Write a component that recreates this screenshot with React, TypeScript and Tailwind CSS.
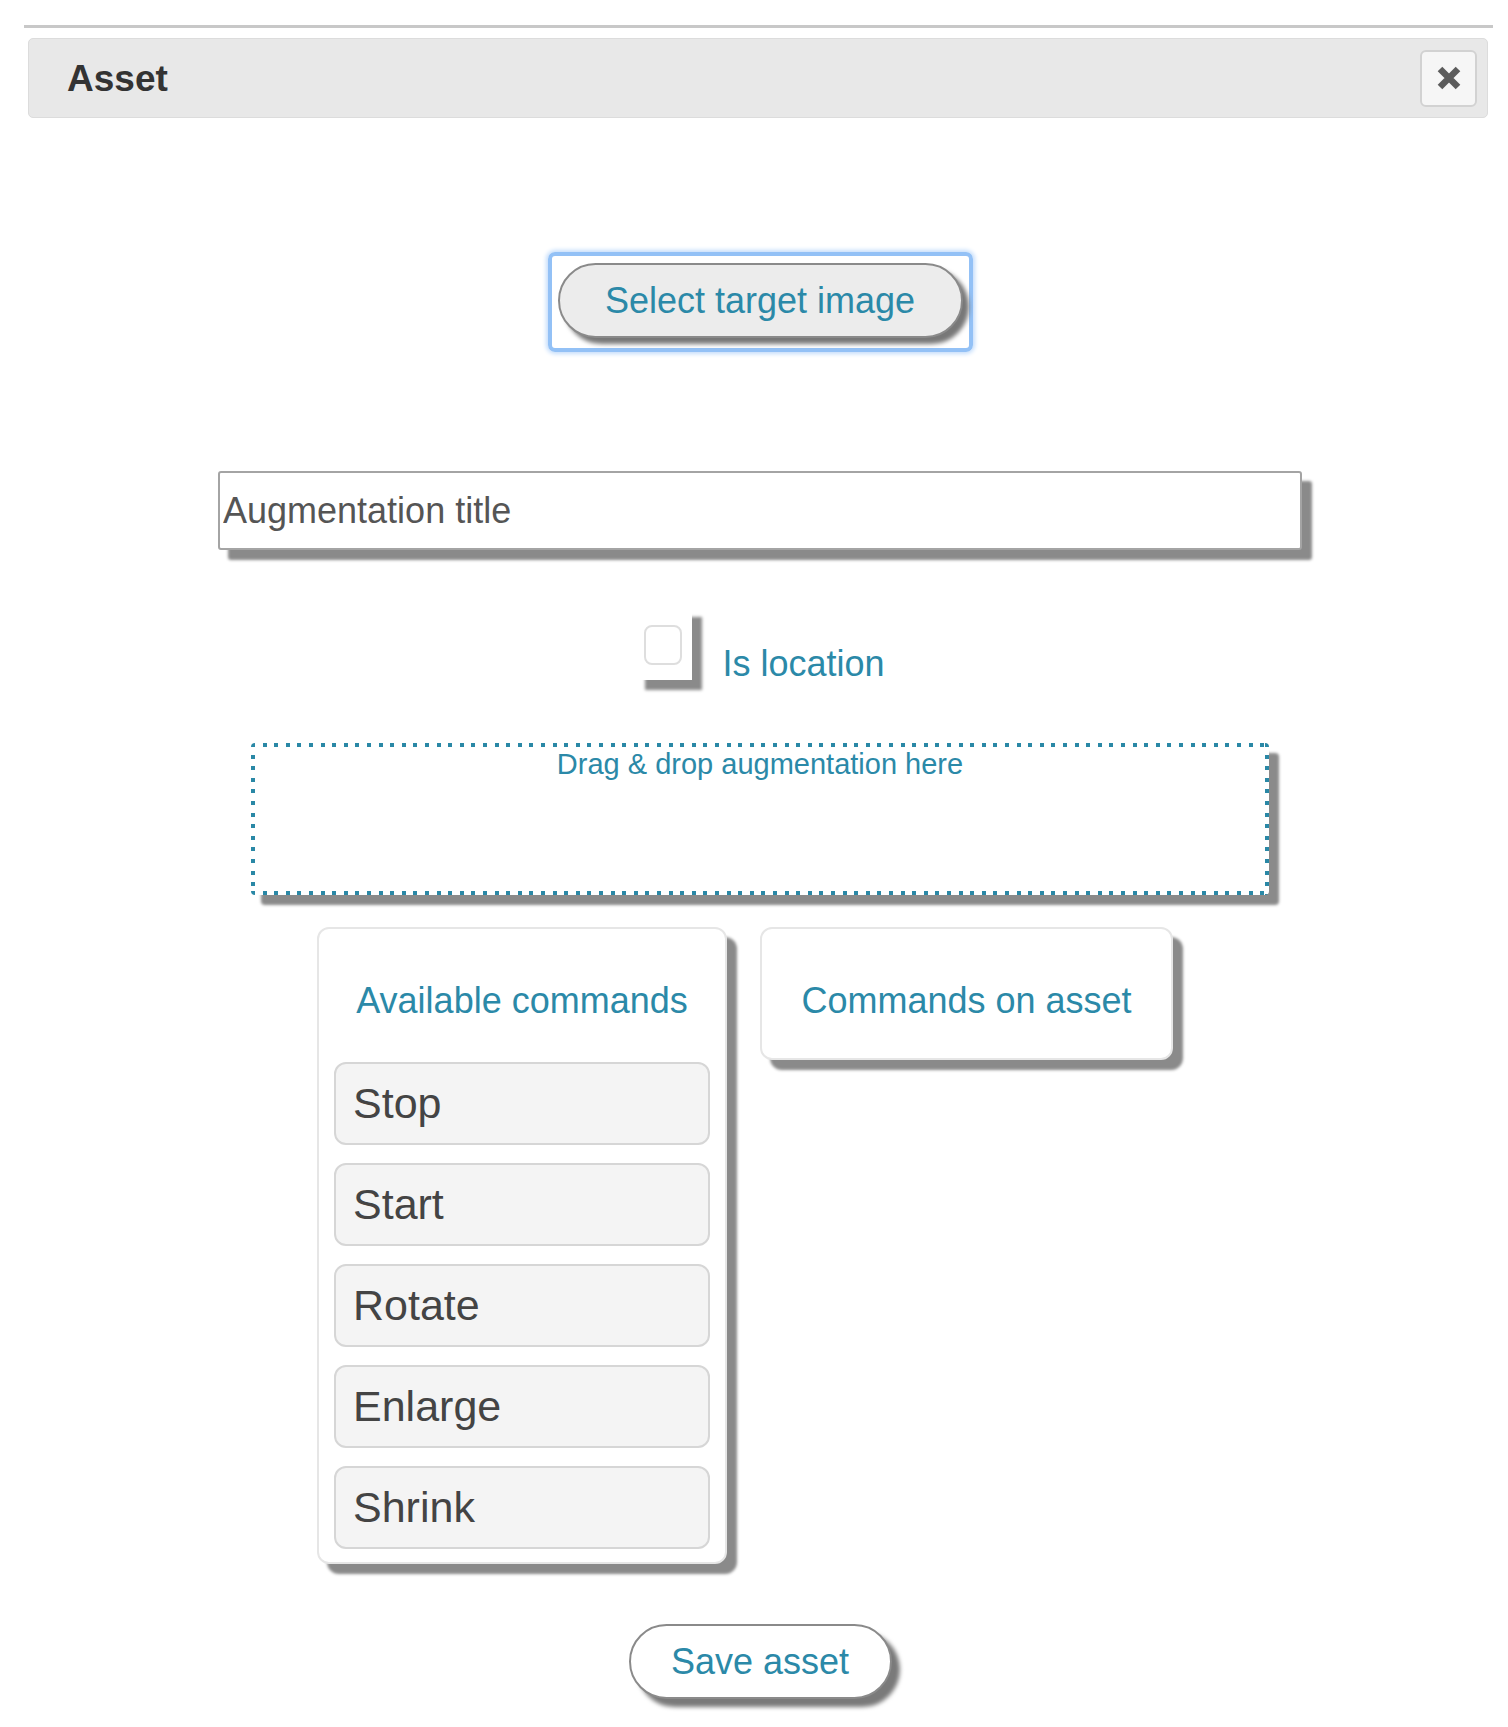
import React from "react"

const COMMANDS = ["Stop", "Start", "Rotate", "Enlarge", "Shrink"]

function CloseIcon() {
  return (
    <svg width="26" height="26" viewBox="0 0 26 26" aria-hidden="true">
      <path d="M4 4 L22 22 M22 4 L4 22" stroke="#5c5c5c" strokeWidth="6.5" strokeLinecap="butt" />
    </svg>
  )
}

export default function App() {
  return (
    <div className="min-h-[1727px] w-[1508px] bg-white font-['Liberation_Sans',Arial,sans-serif]">
      <div className="pt-[25px]">
        <div className="ml-[24px] mr-[15px] h-[3px] bg-[#c8c8c8]" />
      </div>

      <div className="ml-[28px] mr-[20px] mt-[10px] flex h-[80px] items-center justify-between rounded-[5px] border border-[#dcdcdc] bg-[#e8e8e8] pl-[38px] pr-[10px]">
        <h1 className="text-[37px] font-bold leading-none text-[#333]">Asset</h1>
        <button className="flex h-[57px] w-[57px] items-center justify-center rounded-[6px] border-2 border-[#d2d2d2] bg-[#f6f6f6]">
          <CloseIcon />
        </button>
      </div>

      <div className="flex flex-col items-center pl-[12px]">
        <div className="mt-[134px] flex h-[100px] w-[425px] items-start justify-center rounded-[7px] border-[4px] border-[#93c1f6] pt-[7px] shadow-[0_0_4px_2px_#c4ddfb]">
          <button className="h-[75px] w-[405px] rounded-full border-2 border-[#8a8a8a] bg-[#ececec] text-[36px] leading-none text-[#2b89a8] shadow-[6px_6px_4px_#787878]">
            Select target image
          </button>
        </div>

        <input
          type="text"
          placeholder="Augmentation title"
          className="mt-[119px] h-[79px] w-[1084px] rounded-[3px] border-2 border-[#a4a4a4] bg-white pl-[3px] text-[36px] text-[#555] shadow-[10px_10px_3px_#8a8a8a] outline-none placeholder:text-[#555]"
        />

        <div className="mt-[57px] flex h-[73px] items-end">
          <div className="h-[73px] w-[57px] bg-white pl-[9px] pt-[18px] shadow-[10px_10px_3px_#8a8a8a]">
            <div className="h-[40px] w-[38px] rounded-[8px] border-2 border-[#dedede] bg-white" />
          </div>
          <label className="mb-[-4px] ml-[30px] text-[36px] leading-[41px] text-[#2b89a8]">Is location</label>
        </div>

        <div className="mt-[63px] h-[152px] w-[1018px] rounded-[4px] bg-white bg-no-repeat pt-[5px] text-center text-[29px] leading-[33px] text-[#2b89a8] shadow-[10px_10px_3px_#8a8a8a] [background-image:repeating-linear-gradient(90deg,#2a88a6_0_4px,transparent_4px_11.6px),repeating-linear-gradient(90deg,#2a88a6_0_4px,transparent_4px_11.6px),repeating-linear-gradient(180deg,#2a88a6_0_4px,transparent_4px_11.6px),repeating-linear-gradient(180deg,#2a88a6_0_4px,transparent_4px_11.6px)] [background-position:left_top,left_bottom,left_top,right_top] [background-size:100%_4px,100%_4px,4px_100%,4px_100%]">
          Drag &amp; drop augmentation here
        </div>

        <div className="mt-[32px] flex items-start gap-[33px] pr-[30px]">
          <div className="w-[410px] rounded-[12px] border-2 border-[#e6e6e6] bg-white px-[15px] pb-[13px] pt-[51px] shadow-[10px_10px_3px_#8a8a8a]">
            <h2 className="text-center text-[36px] leading-[41px] text-[#2b89a8]">Available commands</h2>
            <div className="mt-[41px] flex flex-col gap-[18px]">
              {COMMANDS.map((c) => (
                <div
                  key={c}
                  className="flex h-[83px] items-center rounded-[12px] border-2 border-[#d6d6d6] bg-[#f4f4f4] pl-[17px] text-[43px] text-[#444]"
                >
                  {c}
                </div>
              ))}
            </div>
          </div>

          <div className="h-[133px] w-[413px] rounded-[12px] border-2 border-[#e6e6e6] bg-white pt-[51px] shadow-[10px_10px_3px_#8a8a8a]">
            <h2 className="text-center text-[36px] leading-[41px] text-[#2b89a8]">Commands on asset</h2>
          </div>
        </div>

        <button className="mt-[60px] h-[75px] w-[263px] rounded-full border-2 border-[#8a8a8a] bg-white text-[36px] leading-none text-[#2b89a8] shadow-[8px_8px_4px_#7a7a7a]">
          Save asset
        </button>
      </div>
    </div>
  )
}
